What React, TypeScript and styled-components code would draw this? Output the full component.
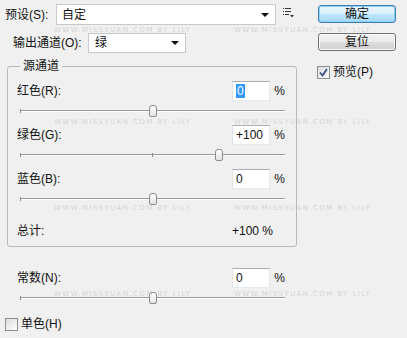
import styled, { createGlobalStyle } from 'styled-components';

const GlobalStyle = createGlobalStyle`
  html, body {
    margin: 0;
    padding: 0;
    background: #f0f0f0;
  }
  body {
    font-family: "Liberation Sans", "Noto Sans CJK SC", sans-serif;
    font-size: 12px;
    color: #111;
  }
`;

const Page = styled.div`
  position: relative;
  width: 407px;
  height: 338px;
  overflow: hidden;
  display: flex;
  background: #f0f0f0;
`;

const LeftCol = styled.div`
  width: 300px;
  display: flex;
  flex-direction: column;
`;

const RightCol = styled.div`
  display: flex;
  flex-direction: column;
  padding: 5px 0 0 18px;
  width: 78px;
`;

const Row = styled.div<{ $indent: number; $top: number }>`
  display: flex;
  align-items: center;
  padding-left: ${({ $indent }) => $indent}px;
  margin-top: ${({ $top }) => $top}px;
`;

const Label = styled.span<{ $width?: number }>`
  width: ${({ $width }) => ($width ? `${$width}px` : 'auto')};
  flex: ${({ $width }) => ($width ? 'none' : '1')};
  line-height: 16px;
  white-space: nowrap;
`;

const Select = styled.div<{ $width: number; $height: number; $pad: number }>`
  box-sizing: border-box;
  width: ${({ $width }) => $width}px;
  height: ${({ $height }) => $height}px;
  background: #fff;
  border: 1px solid #c9c9c9;
  display: flex;
  align-items: center;
  justify-content: space-between;
  padding: 0 6px 0 ${({ $pad }) => $pad}px;
  line-height: 16px;
`;

const Arrow = styled.span`
  width: 0;
  height: 0;
  border-left: 4px solid transparent;
  border-right: 4px solid transparent;
  border-top: 4px solid #111;
`;

const MenuIcon = styled.svg`
  margin-left: 7px;
  margin-top: -4px;
`;

const Group = styled.fieldset`
  margin: 5px 0 0 7px;
  width: 290px;
  box-sizing: border-box;
  border: 1px solid #b9b9b9;
  border-radius: 3px;
  padding: 7px 0 5px 9px;
  min-width: 0;
`;

const Legend = styled.legend`
  margin-left: 3px;
  padding: 0 3px;
  line-height: 16px;
`;

const ValueRow = styled.div`
  display: flex;
  align-items: center;
  height: 20px;
  width: 268px;
`;

const Input = styled.div`
  box-sizing: border-box;
  width: 39px;
  height: 20px;
  background: #fff;
  border: 1px solid;
  border-color: #abadb3 #e3e9ef #e3e9ef #e2e3ea;
  padding-left: 3px;
  display: flex;
  align-items: center;
  line-height: 14px;
`;

const Selected = styled.span`
  background: #3399ff;
  color: #fff;
  padding: 0 1px;
`;

const Percent = styled.span`
  margin-left: 4px;
`;

const Block = styled.div<{ $gap: number }>`
  margin-top: ${({ $gap }) => $gap}px;
`;

const Track = styled.div`
  position: relative;
  margin: 4px 0 0 3px;
  width: 265px;
  height: 12px;
`;

const Line = styled.div`
  position: absolute;
  left: 0;
  right: 0;
  top: 5px;
  height: 1px;
  background: #9c9c9c;
  border-bottom: 1px solid #ffffff;
`;

const Tick = styled.div<{ $x: number }>`
  position: absolute;
  left: ${({ $x }) => $x}px;
  top: 4px;
  width: 1px;
  height: 4px;
  background: #8a8a8a;
`;

const Thumb = styled.div`
  position: absolute;
  top: 0;
  width: 6px;
  height: 10px;
  margin-left: -4px;
  border: 1px solid #8c8c8c;
  border-radius: 3px 3px 2px 2px;
  background: linear-gradient(#ffffff, #e3e3e3);
`;

const Total = styled.div`
  display: flex;
  align-items: center;
  height: 20px;
  margin-top: 16px;
`;

const Button = styled.div<{ $primary?: boolean }>`
  box-sizing: border-box;
  width: 78px;
  height: 18px;
  border-radius: 3px;
  border: 1px solid ${({ $primary }) => ($primary ? '#3c7fb1' : '#707070')};
  background: ${({ $primary }) =>
    $primary
      ? 'linear-gradient(#eaf6fd 0%, #d9f0fc 50%, #bee6fd 51%, #a7d9f5 100%)'
      : 'linear-gradient(#f2f2f2 0%, #ebebeb 50%, #dddddd 51%, #cfcfcf 100%)'};
  box-shadow: ${({ $primary }) => ($primary ? 'inset 0 0 0 1px #8fd0f4' : 'inset 0 0 0 1px #fbfbfb')};
  display: flex;
  align-items: center;
  justify-content: center;
  line-height: 14px;
  margin-bottom: 10px;
`;

const CheckRow = styled.div<{ $indent: number; $top: number }>`
  display: flex;
  align-items: center;
  margin: ${({ $top }) => $top}px 0 0 ${({ $indent }) => $indent}px;
  line-height: 16px;
`;

const Box = styled.div`
  box-sizing: border-box;
  width: 13px;
  height: 13px;
  border: 1px solid #8e8f8f;
  background: linear-gradient(135deg, #dcdcdc, #ffffff);
  margin-right: 3px;
  display: flex;
  align-items: center;
  justify-content: center;
`;

const Watermark = styled.span<{ $top: number; $left: number }>`
  position: absolute;
  top: ${({ $top }) => $top}px;
  left: ${({ $left }) => $left}px;
  font-family: "DejaVu Sans", sans-serif;
  font-size: 7px;
  line-height: 8px;
  letter-spacing: 1.4px;
  color: rgba(150, 150, 150, 0.35);
  white-space: nowrap;
  pointer-events: none;
`;

function Slider({ value }: { value: number }) {
  const pos = 132.5 + (value / 200) * 132.5;
  return (
    <Track>
      <Line />
      <Tick $x={0} />
      <Tick $x={132} />
      <Thumb style={{ left: pos }} />
    </Track>
  );
}

function Channel({
  label,
  value,
  gap,
  selected
}: {
  label: string;
  value: number;
  gap: number;
  selected?: boolean;
}) {
  const text = value > 0 ? `+${value}` : `${value}`;
  return (
    <Block $gap={gap}>
      <ValueRow>
        <Label $width={215}>{label}</Label>
        <Input>{selected ? <Selected>{text}</Selected> : text}</Input>
        <Percent>%</Percent>
      </ValueRow>
      <Slider value={value} />
    </Block>
  );
}

const marks = [26, 118, 204, 290];

export default function App() {
  return (
    <Page>
      <GlobalStyle />
      <LeftCol>
        <Row $indent={5} $top={4}>
          <Label $width={51}>预设(S):</Label>
          <Select $width={220} $height={21} $pad={5}>
            自定
            <Arrow />
          </Select>
          <MenuIcon width="11" height="10" viewBox="0 0 11 10">
            <rect x="0" y="0" width="1" height="1" fill="#333" />
            <rect x="2" y="0" width="6" height="1" fill="#333" />
            <rect x="0" y="3" width="1" height="1" fill="#333" />
            <rect x="2" y="3" width="6" height="1" fill="#333" />
            <rect x="0" y="6" width="1" height="1" fill="#333" />
            <rect x="2" y="6" width="4" height="1" fill="#333" />
            <polygon points="7,7 11,7 9,9.5" fill="#333" />
          </MenuIcon>
        </Row>
        <Row $indent={13} $top={8}>
          <Label $width={75}>输出通道(O):</Label>
          <Select $width={98} $height={20} $pad={6}>
            绿
            <Arrow />
          </Select>
        </Row>
        <Group>
          <Legend>源通道</Legend>
          <Channel label="红色(R):" value={0} gap={0} selected />
          <Channel label="绿色(G):" value={100} gap={8} />
          <Channel label="蓝色(B):" value={0} gap={8} />
          <Total>
            <Label $width={215}>总计:</Label>
            <span>+100 %</span>
          </Total>
        </Group>
        <Row $indent={17} $top={21}>
          <Channel label="常数(N):" value={0} gap={0} />
        </Row>
        <CheckRow $indent={5} $top={12}>
          <Box />
          单色(H)
        </CheckRow>
      </LeftCol>
      <RightCol>
        <Button $primary>确定</Button>
        <Button>复位</Button>
        <CheckRow $indent={-1} $top={3}>
          <Box>
            <svg width="9" height="9" viewBox="0 0 9 9">
              <path d="M1 4.5 L3.5 7.5 L8 1" stroke="#3b4f8a" strokeWidth="1.8" fill="none" />
            </svg>
          </Box>
          预览(P)
        </CheckRow>
      </RightCol>
      {marks.map((top) => (
        <Watermark key={`a${top}`} $top={top} $left={54}>
          WWW.MISSYUAN.COM BY LILY
        </Watermark>
      ))}
      {marks.map((top) => (
        <Watermark key={`b${top}`} $top={top} $left={234}>
          WWW.MISSYUAN.COM BY LILY
        </Watermark>
      ))}
    </Page>
  );
}
